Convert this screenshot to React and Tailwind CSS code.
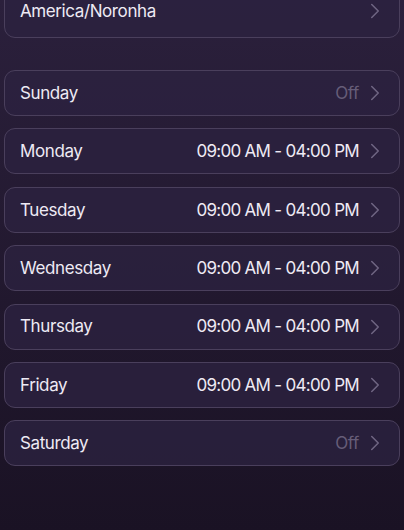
import { ChevronRight } from 'lucide-react';

const days = [
  { name: 'Monday', hours: '09:00 AM - 04:00 PM' },
  { name: 'Tuesday', hours: '09:00 AM - 04:00 PM' },
  { name: 'Wednesday', hours: '09:00 AM - 04:00 PM' },
  { name: 'Thursday', hours: '09:00 AM - 04:00 PM' },
  { name: 'Friday', hours: '09:00 AM - 04:00 PM' },
  { name: 'Saturday', hours: null },
];

function Row({ label, value, tall }) {
  return (
    <div
      className={`flex items-center justify-between rounded-[11px] border border-[#4a3f5c] bg-[#2c2240]/80 pl-[15px] pr-[11px] ${tall ? 'h-[54px]' : 'h-[46px]'}`}
    >
      <span className="pt-px text-[17px] text-[#eeeaf4] tracking-[-0.4px]">{label}</span>
      <div className="flex items-center gap-[3px]">
        {value === null ? (
          <span className="pt-px text-[17px] text-[#665d78] tracking-[-0.4px]">Off</span>
        ) : value ? (
          <span className="pt-px text-[17px] text-[#eeeaf4] tracking-[-0.7px]">{value}</span>
        ) : null}
        <ChevronRight size={26} strokeWidth={1.4} className="text-[#6f6582]" />
      </div>
    </div>
  );
}

export default function App() {
  return (
    <div
      className="w-[404px] h-[530px] overflow-hidden bg-gradient-to-b from-[#2b203c] to-[#1a1224] px-1"
      style={{ fontFamily: 'Inter, "Noto Sans", sans-serif' }}
    >
      <div className="-mt-[16px]">
        <Row label="America/Noronha" value="" tall />
      </div>
      <div className="mt-[32px] flex flex-col gap-[12.4px]">
        <Row label="Sunday" value={null} />
        {days.map(d => (
          <Row key={d.name} label={d.name} value={d.hours} />
        ))}
      </div>
    </div>
  );
}
